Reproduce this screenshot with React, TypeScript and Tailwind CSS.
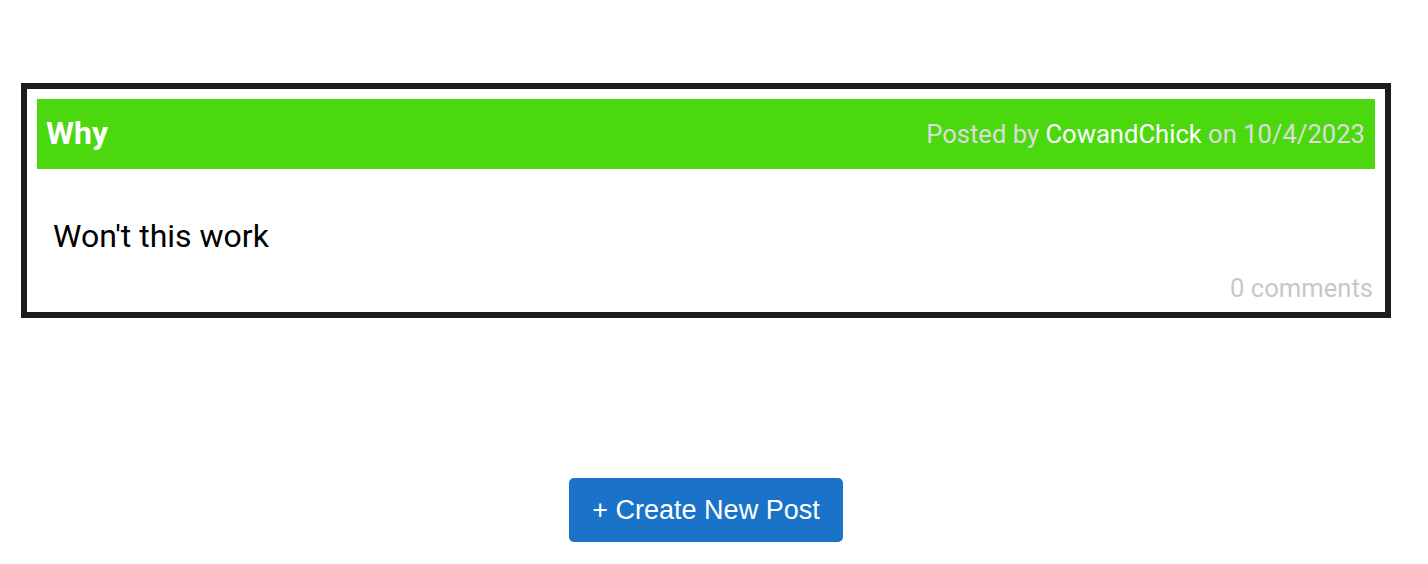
import React from "react";

interface Post {
  title: string;
  author: string;
  date: string;
  body: string;
  comments: number;
}

const posts: Post[] = [
  {
    title: "Why",
    author: "CowandChick",
    date: "10/4/2023",
    body: "Won't this work",
    comments: 0,
  },
];

const PostCard = ({ post }: { post: Post }) => (
  <div className="border-[6px] border-[#1c1c20] bg-white px-[10px] pt-[10px] pb-[9px]">
    {/* Header bar */}
    <div className="flex h-[70px] items-center justify-between bg-[#4cd80f] px-[10px]">
      <h2 className="-mt-[2px] -ml-[1px] text-[32px] leading-[38px] font-bold text-white">{post.title}</h2>
      <span className="-mt-[1px] text-[25.6px] leading-[30px] text-[#dcdcdc]">
        Posted by <span className="text-white">{post.author}</span> on {post.date}
      </span>
    </div>

    {/* Body */}
    <p className="mt-[49px] pl-[16px] text-[32px] leading-[36px] text-black">{post.body}</p>

    <div className="mt-[19px] pr-[2px] text-right text-[25.6px] leading-[30px] text-[#c8c8c8]">
      {post.comments} comments
    </div>
  </div>
);

export default function App() {
  return (
    <div className="min-h-[564px] bg-white font-['Roboto',sans-serif]">
      <div className="ml-[21px] w-[1370px] pt-[83px]">
        {posts.map((post, i) => (
          <PostCard key={i} post={post} />
        ))}

        <div className="mt-[160px] flex justify-center">
          <button className="h-[64px] w-[274px] rounded-[5px] bg-[#1a73c9] font-['Liberation_Sans',Arial,sans-serif] text-[27px] text-white">
            + Create New Post
          </button>
        </div>
      </div>
    </div>
  );
}
